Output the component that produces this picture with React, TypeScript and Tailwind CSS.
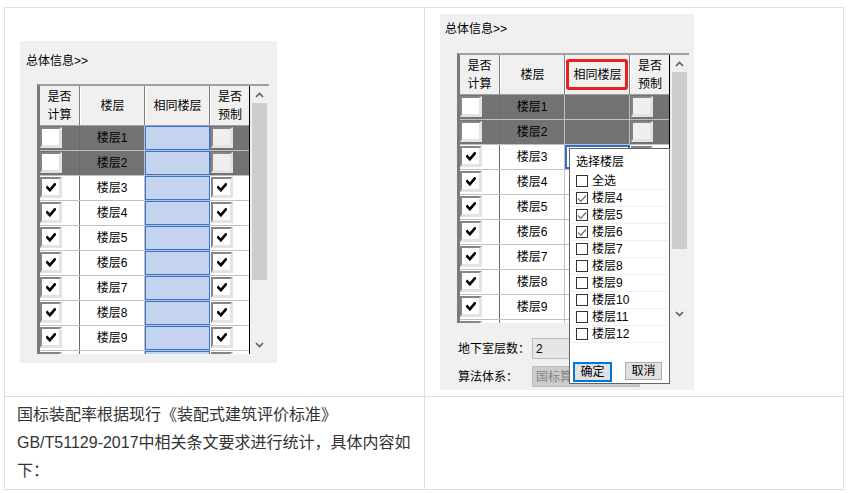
import React from "react";

const FONT = "font-['Liberation_Sans','Noto_Sans_CJK_SC',sans-serif]";

function BoldCheck() {
  return (
    <svg width="10" height="9" viewBox="0 0 10 9">
      <path d="M1.2 4.3 L3.9 7.2 L8.8 1.4" stroke="#000" strokeWidth="2.6" fill="none" strokeLinecap="square" />
    </svg>
  );
}

function ThinCheck() {
  return (
    <svg width="10" height="9" viewBox="0 0 10 9">
      <path d="M1 4.5 L3.8 7.3 L9 1.5" stroke="#6a6a6a" strokeWidth="1.2" fill="none" />
    </svg>
  );
}

function GridBox({ checked, gray }: { checked: boolean; gray?: boolean }) {
  return (
    <div
      className={`flex h-[21px] w-[22px] items-center justify-center border-t-2 border-l-2 border-r-[3px] border-b-[3px] border-t-[#858585] border-l-[#858585] border-r-[#e3e3e3] border-b-[#e3e3e3] ${
        gray ? "bg-[#efefef]" : "bg-white"
      }`}
    >
      {checked && <BoldCheck />}
    </div>
  );
}

function Chevron({ up }: { up: boolean }) {
  return (
    <svg width="9" height="6" viewBox="0 0 9 6">
      <path d={up ? "M1 5 L4.5 1.5 L8 5" : "M1 1 L4.5 4.5 L8 1"} stroke="#606060" strokeWidth="1.6" fill="none" />
    </svg>
  );
}

function DataRow({ n, variant }: { n: number; variant: "left" | "right" }) {
  const dark = n <= 2;
  const checked = !dark;
  const partial = n > 9;
  let col3: React.ReactNode;
  if (variant === "left") {
    col3 = (
      <div className="flex w-[65px] shrink-0 p-0">
        <div className="h-full w-full border border-[#3573d4] bg-[#c5d4ee]" />
      </div>
    );
  } else if (n === 3) {
    col3 = <div className="w-[65px] shrink-0 border-2 border-[#2f6fd0]" />;
  } else {
    col3 = <div className="w-[65px] shrink-0 border-r border-[#c0c0c0]" />;
  }
  return (
    <div className={`flex h-[25px] shrink-0 border-b border-[#c0c0c0] ${dark ? "bg-[#737373]" : "bg-white"}`}>
      <div className="flex w-[40px] shrink-0 items-start border-r border-[#6a6a6a] pt-[1px]">
        <GridBox checked={checked && !partial} />
      </div>
      <div className="flex w-[65px] shrink-0 items-center justify-center border-r border-[#c0c0c0] text-[12px] leading-none text-black">
        {partial ? "" : `楼层${n}`}
      </div>
      {col3}
      <div className="w-[39px] shrink-0 pl-[1px] pt-[1px]">
        <GridBox checked={checked && !partial} gray={dark} />
      </div>
    </div>
  );
}

function FloorGrid({ variant }: { variant: "left" | "right" }) {
  const rows = [1, 2, 3, 4, 5, 6, 7, 8, 9, 10];
  return (
    <div className="flex h-[270px] w-[232px] overflow-hidden border-t-2 border-l-[3px] border-t-[#a0a0a0] border-l-[#7a7a7a] bg-white">
      <div className="flex w-[209px] shrink-0 flex-col">
        <div className="flex h-[40px] shrink-0 border-b border-[#a0a0a0] bg-[#f0f0f0] text-[12px] leading-[18px] text-black">
          <div className="flex w-[40px] shrink-0 items-center justify-center border-r border-[#808080] text-center">
            是否
            <br />
            计算
          </div>
          <div className="flex w-[65px] shrink-0 items-center justify-center border-r border-[#808080] border-l border-l-white">
            楼层
          </div>
          <div className="relative flex w-[65px] shrink-0 items-center justify-center border-r border-[#808080] border-l border-l-white">
            相同楼层
            {variant === "right" && (
              <div className="absolute left-0 top-[4px] h-[31px] w-[62px] rounded-[3px] border-[3px] border-[#ea1f1f]" />
            )}
          </div>
          <div className="flex w-[39px] shrink-0 items-center justify-center border-l border-l-white text-center">
            是否
            <br />
            预制
          </div>
        </div>
        {rows.map((n) => (
          <DataRow key={n} n={n} variant={variant} />
        ))}
      </div>
      <div className="flex w-[20px] shrink-0 flex-col border-l border-black bg-[#f0f0f0]">
        <div className="flex h-[17px] shrink-0 items-center justify-center">
          <Chevron up />
        </div>
        <div className="mx-[2px] h-[177px] shrink-0 bg-[#cdcdcd]" />
        <div className="flex-1" />
        <div className="mb-[1px] flex h-[17px] shrink-0 items-center justify-center">
          <Chevron up={false} />
        </div>
      </div>
    </div>
  );
}

function LeftShot() {
  return (
    <div className="h-[322px] w-[257px] bg-[#f0f0f0] pl-[17px] pt-[12px]">
      <div className="-ml-[11px] text-[12px] leading-[16px] text-black">总体信息&gt;&gt;</div>
      <div className="mt-[15px]">
        <FloorGrid variant="left" />
      </div>
    </div>
  );
}

function PopupItem({ label, checked }: { label: string; checked?: boolean }) {
  return (
    <div className="flex h-[17px] items-center border-b border-[#efefef] pl-[5px]">
      <div className="flex h-[12px] w-[12px] items-center justify-center border border-[#333] bg-white">
        {checked && <ThinCheck />}
      </div>
      <span className="ml-[4px] text-[12px] leading-none text-black">{label}</span>
    </div>
  );
}

function RightShot() {
  const items = [4, 5, 6, 7, 8, 9, 10, 11, 12];
  return (
    <div className="relative h-[376px] w-[254px] bg-[#f0f0f0] pl-[17px] pt-[7px]">
      <div className="-ml-[12px] text-[12px] leading-[16px] text-black">总体信息&gt;&gt;</div>
      <div className="mt-[16px]">
        <FloorGrid variant="right" />
      </div>
      <div className="mt-[15px] flex flex-col gap-[7px] text-[12px] text-black">
        <div className="flex h-[21px] items-center">
          <span className="w-[75px] pl-[1px]">地下室层数：</span>
          <div className="flex h-[21px] w-[108px] items-center border border-[#bcbcbc] bg-[#e6e6e6] pl-[3px]">2</div>
        </div>
        <div className="flex h-[21px] items-center">
          <span className="w-[75px] pl-[1px]">算法体系：</span>
          <div className="flex h-[21px] w-[108px] items-center border border-[#bdbdbd] bg-[#cccccc] pl-[3px] text-[#838383]">
            国标算法
          </div>
        </div>
      </div>

      <div className="absolute left-[129px] top-[134px] flex h-[236px] w-[101px] flex-col border border-[#646464] bg-white">
        <div className="flex h-[24px] shrink-0 items-center pl-[6px] pt-[1px] text-[12px] text-black">选择楼层</div>
        <div className="mx-[1px] flex h-[185px] shrink-0 flex-col">
          <PopupItem label="全选" />
          {items.map((n) => (
            <PopupItem key={n} label={`楼层${n}`} checked={n <= 6} />
          ))}
        </div>
        <div className="flex items-start gap-[13px] pl-[3px] pt-[4px] text-[12px] text-black">
          <div className="flex h-[20px] w-[39px] items-center justify-center border-2 border-[#0078d7] bg-[#e1e1e1]">确定</div>
          <div className="flex h-[18px] w-[37px] items-center justify-center border border-[#adadad] bg-[#e1e1e1]">取消</div>
        </div>
      </div>
    </div>
  );
}

export default function App() {
  return (
    <div className={`min-h-[493px] w-[850px] bg-white pl-[4px] pt-[7px] ${FONT}`}>
      <div className="grid w-[840px] grid-cols-[420px_419px] border-l border-t border-[#dfdfdf]">
        <div className="flex items-center border-r border-b border-[#dfdfdf] pl-[15px]">
          <LeftShot />
        </div>
        <div className="border-r border-b border-[#dfdfdf] py-[6px] pl-[15px]">
          <RightShot />
        </div>
        <div className="border-r border-b border-[#dfdfdf] py-[4px] pl-[12px] pr-[10px] text-[16px] leading-[28px] text-[#333]">
          国标装配率根据现行《装配式建筑评价标准》GB/T51129-2017中相关条文要求进行统计，具体内容如下：
        </div>
        <div className="border-r border-b border-[#dfdfdf]" />
      </div>
    </div>
  );
}
